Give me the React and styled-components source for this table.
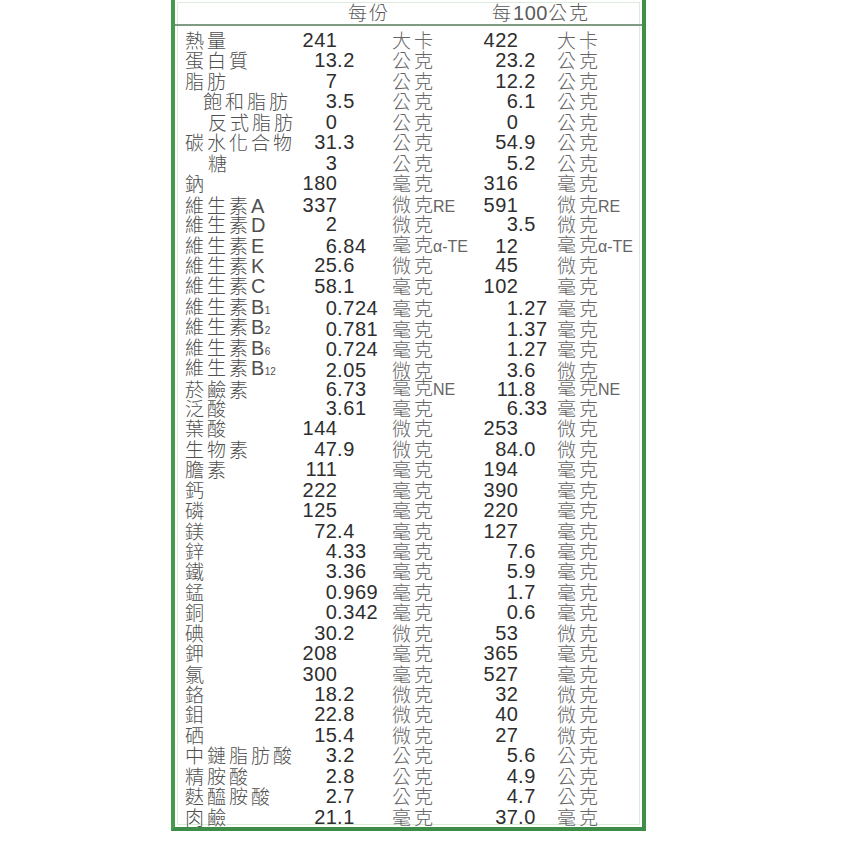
import React from "react";
import styled, { createGlobalStyle } from "styled-components";

const GlobalStyle = createGlobalStyle`
  html, body {
    margin: 0;
    padding: 0;
    background: #ffffff;
    overflow: hidden;
  }
  body {
    font-family: "Liberation Sans", "Noto Sans CJK TC", Arial, sans-serif;
  }
`;

const Page = styled.div`
  width: 843px;
  height: 843px;
  padding-left: 171px;
  box-sizing: border-box;
`;

const Panel = styled.div`
  width: 475px;
  margin-top: -4px;
  border: 4px solid #47994e;
  border-bottom-color: #3d8c47;
  border-right-color: #408f48;
  box-sizing: border-box;
  background: #ffffff;
  box-shadow: inset 0 0 0 2px #ffffff, inset 0 0 0 3px #dcebdc;
`;

const Header = styled.div`
  display: grid;
  grid-template-columns: 144px 1fr;
  height: 24px;
  padding-left: 173px;
  border-bottom: 2px solid #7f9c82;
  line-height: 24px;
  color: #5a5a5a;
`;

const HeaderCell = styled.span`
  font-family: "Noto Sans CJK TC", "Liberation Sans", sans-serif;
  font-weight: 300;
  font-size: 19px;
  letter-spacing: 2px;
`;

const HeaderNum = styled.span`
  font-family: "Liberation Sans", Arial, sans-serif;
  font-size: 20px;
  letter-spacing: 0.5px;
`;

const Body = styled.div`
  padding-top: 4px;
`;

const Row = styled.div`
  display: grid;
  grid-template-columns: 115px 37px 55px 88px 38px 39px 1fr;
  align-items: center;
  padding-left: 10px;
  height: 20.45px;
  line-height: 20.45px;
  white-space: nowrap;
`;

const Label = styled.div`
  padding-left: ${(props) => props.indent || 0}px;
  color: #505050;
  font-size: 19px;
  font-weight: 300;
  letter-spacing: 3px;
  font-family: "Noto Sans CJK TC", "Liberation Sans", sans-serif;
`;

const Latin = styled.span`
  font-family: "Liberation Sans", Arial, sans-serif;
  font-size: 20px;
  font-weight: 400;
  letter-spacing: 0.4px;
`;

const Sub = styled.span`
  font-family: "Liberation Sans", Arial, sans-serif;
  font-size: 10px;
  font-weight: 400;
  letter-spacing: 0;
`;

const IntPart = styled.div`
  text-align: right;
  color: #2e2e2e;
  font-size: 20px;
  letter-spacing: 0.6px;
  margin-right: -0.6px;
`;

const FracPart = styled.div`
  color: #2e2e2e;
  font-size: 20px;
  letter-spacing: 0.6px;
`;

const Unit = styled.div`
  color: #666666;
  font-size: 19px;
  font-weight: 300;
  letter-spacing: 3px;
  font-family: "Noto Sans CJK TC", "Liberation Sans", sans-serif;
`;

const UnitTail = styled.span`
  font-family: "Liberation Sans", Arial, sans-serif;
  font-size: 16px;
  font-weight: 400;
  letter-spacing: 0;
  margin-left: -3px;
`;

const rows = [
  ["熱量", 0, "241", "大卡", "422"],
  ["蛋白質", 0, "13.2", "公克", "23.2"],
  ["脂肪", 0, "7", "公克", "12.2"],
  ["飽和脂肪", 18, "3.5", "公克", "6.1"],
  ["反式脂肪", 23, "0", "公克", "0"],
  ["碳水化合物", 0, "31.3", "公克", "54.9"],
  ["糖", 23, "3", "公克", "5.2"],
  ["鈉", 0, "180", "毫克", "316"],
  ["維生素|A", 0, "337", "微克|RE", "591"],
  ["維生素|D", 0, "2", "微克", "3.5"],
  ["維生素|E", 0, "6.84", "毫克|α-TE", "12"],
  ["維生素|K", 0, "25.6", "微克", "45"],
  ["維生素|C", 0, "58.1", "毫克", "102"],
  ["維生素|B|1", 0, "0.724", "毫克", "1.27"],
  ["維生素|B|2", 0, "0.781", "毫克", "1.37"],
  ["維生素|B|6", 0, "0.724", "毫克", "1.27"],
  ["維生素|B|12", 0, "2.05", "微克", "3.6"],
  ["菸鹼素", 0, "6.73", "毫克|NE", "11.8"],
  ["泛酸", 0, "3.61", "毫克", "6.33"],
  ["葉酸", 0, "144", "微克", "253"],
  ["生物素", 0, "47.9", "微克", "84.0"],
  ["膽素", 0, "111", "毫克", "194"],
  ["鈣", 0, "222", "毫克", "390"],
  ["磷", 0, "125", "毫克", "220"],
  ["鎂", 0, "72.4", "毫克", "127"],
  ["鋅", 0, "4.33", "毫克", "7.6"],
  ["鐵", 0, "3.36", "毫克", "5.9"],
  ["錳", 0, "0.969", "毫克", "1.7"],
  ["銅", 0, "0.342", "毫克", "0.6"],
  ["碘", 0, "30.2", "微克", "53"],
  ["鉀", 0, "208", "毫克", "365"],
  ["氯", 0, "300", "毫克", "527"],
  ["鉻", 0, "18.2", "微克", "32"],
  ["鉬", 0, "22.8", "微克", "40"],
  ["硒", 0, "15.4", "微克", "27"],
  ["中鏈脂肪酸", 0, "3.2", "公克", "5.6"],
  ["精胺酸", 0, "2.8", "公克", "4.9"],
  ["麩醯胺酸", 0, "2.7", "公克", "4.7"],
  ["肉鹼", 0, "21.1", "毫克", "37.0"],
];

const splitNumber = (value) => {
  const dot = value.indexOf(".");
  if (dot === -1) return [value, ""];
  return [value.slice(0, dot), value.slice(dot)];
};

const LabelText = ({ text }) => {
  const [zh, letter, sub] = text.split("|");
  return (
    <>
      {zh}
      {letter && <Latin>{letter}</Latin>}
      {sub && <Sub>{sub}</Sub>}
    </>
  );
};

const UnitText = ({ text }) => {
  const [zh, tail] = text.split("|");
  return (
    <>
      {zh}
      {tail && <UnitTail>{tail}</UnitTail>}
    </>
  );
};

const NutritionRow = ({ label, indent, serving, unit, per100 }) => {
  const [int1, frac1] = splitNumber(serving);
  const [int2, frac2] = splitNumber(per100);
  return (
    <Row>
      <Label indent={indent}>
        <LabelText text={label} />
      </Label>
      <IntPart>{int1}</IntPart>
      <FracPart>{frac1}</FracPart>
      <Unit>
        <UnitText text={unit} />
      </Unit>
      <IntPart>{int2}</IntPart>
      <FracPart>{frac2}</FracPart>
      <Unit>
        <UnitText text={unit} />
      </Unit>
    </Row>
  );
};

export default function App() {
  return (
    <>
      <GlobalStyle />
      <Page>
        <Panel>
          <Header>
            <span>
              <HeaderCell>每份</HeaderCell>
            </span>
            <span>
              <HeaderCell>每</HeaderCell>
              <HeaderNum>100</HeaderNum>
              <HeaderCell>公克</HeaderCell>
            </span>
          </Header>
          <Body>
            {rows.map(([label, indent, serving, unit, per100]) => (
              <NutritionRow
                key={label}
                label={label}
                indent={indent}
                serving={serving}
                unit={unit}
                per100={per100}
              />
            ))}
          </Body>
        </Panel>
      </Page>
    </>
  );
}
